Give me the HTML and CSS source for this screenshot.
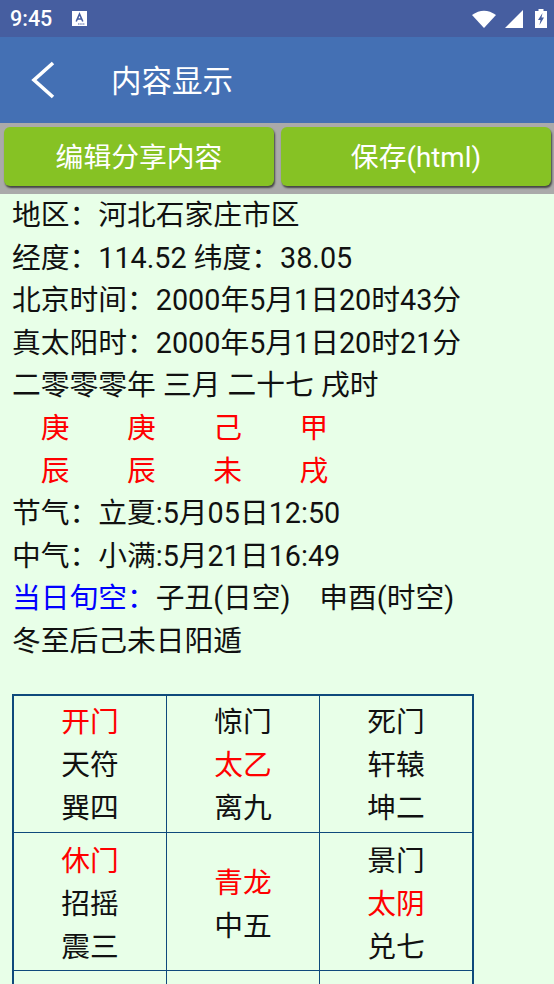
FILE: index.html
```html
<!DOCTYPE html>
<html lang="zh-CN">
<head>
    <meta charset="UTF-8">
    <meta name="viewport" content="width=device-width, initial-scale=1.0">
    <title>内容显示</title>
    <link rel="stylesheet" href="styles.css">
</head>
<body>
    <div class="statusbar">
        <span class="time">9:45</span>
        <svg class="notice" width="15" height="15" viewBox="0 0 15 15">
            <path fill="#fff" d="M0 0h15v15H0z"/>
            <path fill="none" stroke="#465ea0" stroke-width="1.6" d="M4.2 10.5 7.5 3l3.3 7.500M5.300 8h4.400"/>
            <path stroke="#465ea0" stroke-width="1.200" stroke-dasharray="1.500 .7" d="M6 13h7"/>
        </svg>
        <span class="status-icons">
            <svg width="24" height="18" viewBox="0 0 24 18"><path fill="#fff" d="M0 5Q12-3.500 24 5L12 18z"/></svg>
            <svg width="18" height="18" viewBox="0 0 18 18"><path fill="#fff" d="M18 0v18H0z"/></svg>
            <svg class="battery" width="12" height="19" viewBox="0 0 12 19">
                <path fill="#fff" d="M3.500 0h5v2H12v17H0V2h3.500z"/>
                <path fill="#465ea0" d="M7.500 4 3 11h2.500l-1 5L9 8.500H6.500z"/>
            </svg>
        </span>
    </div>
    <div class="titlebar">
        <svg class="back" width="26" height="38" viewBox="0 0 26 38"><path fill="none" stroke="#fff" stroke-width="3.600" d="M23 2 4 19l19 17"/></svg>
        <span class="title">内容显示</span>
    </div>
    <div class="actions">
        <button class="action">编辑分享内容</button>
        <button class="action">保存(html)</button>
    </div>
    <div class="content">
        <p>地区：河北石家庄市区</p>
        <p>经度：114.52 纬度：38.05</p>
        <p>北京时间：2000年5月1日20时43分</p>
        <p>真太阳时：2000年5月1日20时21分</p>
        <p>二零零零年 三月 二十七 戌时</p>
        <p class="red">　庚　　庚　　己　　甲</p>
        <p class="red">　辰　　辰　　未　　戌</p>
        <p>节气：立夏:5月05日12:50</p>
        <p>中气：小满:5月21日16:49</p>
        <p><span class="blue">当日旬空：</span>子丑(日空)　申酉(时空)</p>
        <p>冬至后己未日阳遁</p>
        <table class="pan">
            <tr>
                <td><span class="red">开门</span><br>天符<br>巽四</td>
                <td>惊门<br><span class="red">太乙</span><br>离九</td>
                <td>死门<br>轩辕<br>坤二</td>
            </tr>
            <tr class="row-low">
                <td><span class="red">休门</span><br>招摇<br>震三</td>
                <td><span class="red">青龙</span><br>中五</td>
                <td>景门<br><span class="red">太阴</span><br>兑七</td>
            </tr>
            <tr>
                <td></td>
                <td></td>
                <td></td>
            </tr>
        </table>
    </div>
</body>
</html>
```

FILE: styles.css
```css
html, body {
    margin: 0;
    height: 984px;
    overflow: hidden;
}

body {
    font-family: Roboto, "Noto Sans CJK SC", sans-serif;
    background-color: #e8ffe8;
    color: #111;
}

.statusbar {
    height: 37px;
    background-color: #465ea0;
    display: flex;
    align-items: center;
    padding: 0 7px 0 10px;
    color: #fff;
}

.time {
    font-size: 21.500px;
    font-weight: 500;
}

.notice {
    margin-left: 20px;
}

.status-icons {
    margin-left: auto;
    display: flex;
    align-items: center;
    gap: 9px;
}

.battery {
    margin-left: 3px;
}

.titlebar {
    height: 86px;
    background-color: #4470b4;
    display: flex;
    align-items: center;
    color: #fff;
}

.back {
    margin-left: 30px;
}

.title {
    margin-left: 55px;
    padding-bottom: 2px;
    font-size: 30.500px;
}

.actions {
    height: 71px;
    box-sizing: border-box;
    background-color: #aaa;
    display: flex;
    gap: 7px;
    padding: 4px 3px 0 4px;
}

.action {
    flex: 1;
    height: 59px;
    border: none;
    border-radius: 6px;
    background-color: #86c224;
    box-shadow: 1px 2px 2px #444;
    color: #fff;
    font-family: inherit;
    font-size: 27.800px;
    padding: 0 0 3px;
}

.content {
    padding-left: 12px;
    font-size: 28.750px;
    line-height: 42.600px;
}

p {
    margin: 0;
    white-space: pre;
}

.red {
    color: #f00;
}

.blue {
    color: #00f;
}

.pan {
    margin-top: 31.500px;
    border-collapse: collapse;
    border: 2px solid #0f4a7c;
    line-height: 43px;
}

.pan td {
    width: 153.300px;
    height: 137.500px;
    padding: 3px 0 0;
    box-sizing: border-box;
    border: 1px solid #0f4a7c;
    text-align: center;
    vertical-align: middle;
}

.pan .row-low td {
    padding-top: 7px;
}
```
